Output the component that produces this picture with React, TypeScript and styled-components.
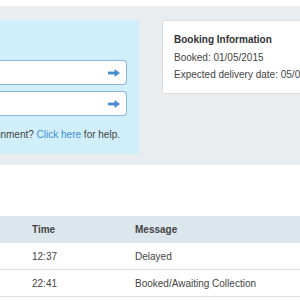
import React from 'react'
import styled, { createGlobalStyle } from 'styled-components'

const GlobalStyle = createGlobalStyle`
  html, body {
    margin: 0;
    padding: 0;
    overflow: hidden;
    background: #ffffff;
  }

  body {
    font-family: 'Liberation Sans', Arial, Helvetica, sans-serif;
    font-size: 10px;
    color: #444444;
  }
`

const trackingEvents = [
  { time: '12:37', message: 'Delayed' },
  { time: '22:41', message: 'Booked/Awaiting Collection' },
]

const ArrowIcon: React.FC = () => (
  <svg width="12" height="8" viewBox="0 0 12 8" aria-hidden="true">
    <rect x="0" y="2.6" width="7.5" height="2.8" fill="#4a8dcd" />
    <polygon points="6.5,0 12,4 6.5,8" fill="#4a8dcd" />
  </svg>
)

const App: React.FC = () => {
  return (
    <Page>
      <GlobalStyle />
      <TopStrip />
      <SearchSection>
        <SearchPanel>
          <SearchField>
            <FieldInput aria-label="Consignment number" />
            <ArrowIcon />
          </SearchField>
          <SearchField>
            <FieldInput aria-label="Postcode" />
            <ArrowIcon />
          </SearchField>
          <HelpLine>
            <span>
              Having trouble tracking your consignment? <HelpLink href="#">Click here</HelpLink> for
              help.
            </span>
          </HelpLine>
        </SearchPanel>
        <InfoCard>
          <CardTitle>Booking Information</CardTitle>
          <CardLine>Booked: 01/05/2015</CardLine>
          <CardLine>Expected delivery date: 05/05/2015</CardLine>
        </InfoCard>
      </SearchSection>
      <EventsTable>
        <HeaderRow>
          <Cell />
          <Cell>Time</Cell>
          <Cell>Message</Cell>
        </HeaderRow>
        {trackingEvents.map((event, index) => (
          <BodyRow key={index}>
            <Cell />
            <Cell>{event.time}</Cell>
            <Cell>{event.message}</Cell>
          </BodyRow>
        ))}
      </EventsTable>
    </Page>
  )
}
export default App

const Page = styled.div`
  width: 300px;
  display: flex;
  flex-direction: column;
  overflow: hidden;
`

const TopStrip = styled.div`
  height: 6px;
  background: #ffffff;
`

const SearchSection = styled.section`
  display: flex;
  align-items: flex-start;
  gap: 23px;
  background: #e9edf0;
  padding: 14px 0 11px;
`

const SearchPanel = styled.div`
  flex: 0 0 139px;
  min-width: 0;
  overflow: hidden;
  box-sizing: border-box;
  display: flex;
  flex-direction: column;
  gap: 6px;
  background: #d1eefb;
  padding: 40px 12px 10px 0;
`

const SearchField = styled.label`
  display: flex;
  align-items: center;
  height: 25px;
  box-sizing: border-box;
  background: #ffffff;
  border: 1px solid #8bb7e1;
  border-left: none;
  border-radius: 0 4px 4px 0;
  padding-right: 6px;
`

const FieldInput = styled.input`
  flex: 1;
  min-width: 0;
  height: 100%;
  border: none;
  outline: none;
  background: transparent;
  padding: 0;
`

const HelpLine = styled.p`
  display: flex;
  justify-content: flex-end;
  margin: 4px 7px 0 0;
  white-space: nowrap;
  line-height: 18px;
  color: #444444;
`

const HelpLink = styled.a`
  color: #3f8fd5;
  text-decoration: none;
`

const InfoCard = styled.div`
  flex: 0 0 220px;
  box-sizing: border-box;
  background: #ffffff;
  border: 1px solid #dcdfe2;
  padding: 9px 11px 9px;
  white-space: nowrap;
`

const CardTitle = styled.h3`
  margin: 0;
  font-size: 10px;
  font-weight: bold;
  line-height: 19px;
  color: #333333;
`

const CardLine = styled.p`
  margin: 0;
  line-height: 18px;
  color: #444444;

  & + & {
    margin-top: -1px;
  }
`

const EventsTable = styled.div`
  display: flex;
  flex-direction: column;
  margin-top: 51px;
`

const HeaderRow = styled.div`
  display: grid;
  grid-template-columns: 32px 103px 1fr;
  align-items: center;
  height: 27px;
  background: #dbe6ed;
  font-weight: bold;
  color: #444444;
`

const BodyRow = styled.div`
  display: grid;
  grid-template-columns: 32px 103px 1fr;
  align-items: center;
  height: 27px;
  box-sizing: border-box;
  border-bottom: 1px solid #dddddd;
  color: #444444;
`

const Cell = styled.div`
  white-space: nowrap;
`
